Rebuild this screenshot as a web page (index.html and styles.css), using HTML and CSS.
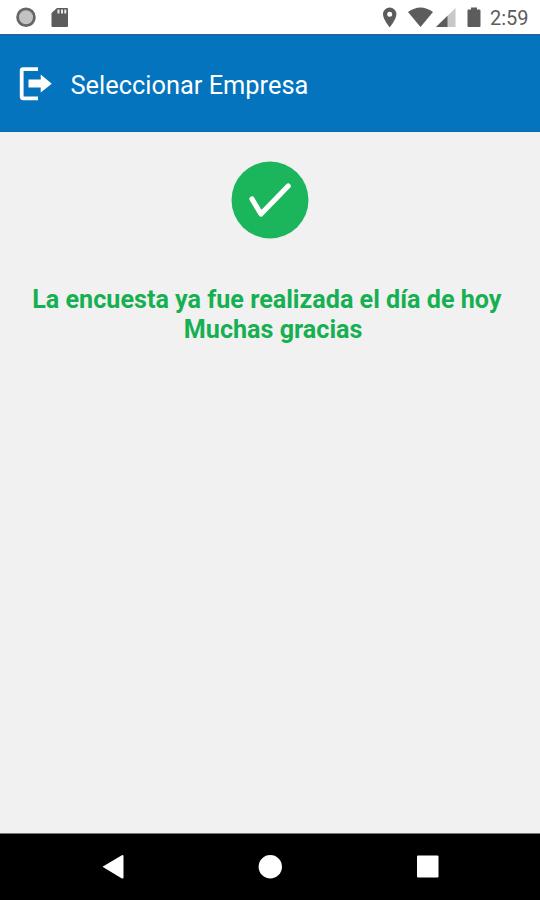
FILE: index.html
```html
<!DOCTYPE html>
<html lang="es">
<head>
<meta charset="utf-8">
<title>Seleccionar Empresa</title>
<link rel="stylesheet" href="styles.css">
</head>
<body>
<div class="screen">
  <div class="status">
    <svg class="status-left" width="72" height="34" viewBox="0 0 72 34">
      <circle cx="26" cy="17.2" r="8.400" fill="#c2c2c2" stroke="#666" stroke-width="2.800"/>
      <path d="M57 8h10q1 0 1 1v17q0 1-1 1H52.500q-1 0-1-1V13z" fill="#5c5c5c"/>
      <path d="M57.500 9.500h2v4h-2zM61 9.500h2v4h-2zM64.300 9.500h2v4h-2z" fill="#e8e8e8"/>
    </svg>
    <svg class="status-right" width="104" height="34" viewBox="380 0 104 34">
      <path fill-rule="evenodd" d="M389.700 7.500a6.700 6.700 0 0 0-6.700 6.700c0 5 6.700 13 6.700 13s6.700-8 6.700-13a6.700 6.700 0 0 0-6.700-6.700zm0 4.200a2.500 2.500 0 1 1 0 5 2.500 2.500 0 0 1 0-5z" fill="#5c5c5c"/>
      <path d="M408 12Q420.500 3 433 12L420.500 27z" fill="#5c5c5c"/>
      <path d="M455.500 8v19H436z" fill="#c8c8c8"/>
      <path d="M447.500 15.800V27H436z" fill="#5c5c5c"/>
      <path d="M471 7.500h6v2h2.500q1 0 1 1V26q0 1-1 1h-11q-1 0-1-1V10.500q0-1 1-1h2.500z" fill="#5c5c5c"/>
    </svg>
    <span class="clock">2:59</span>
  </div>
  <header class="bar">
    <svg class="exit" width="34" height="34" viewBox="19 67 34 34">
      <path d="M38 69.200H23.200Q21.700 69.200 21.700 70.700V96.800Q21.700 98.300 23.200 98.300H38" fill="none" stroke="#fff" stroke-width="3.800"/>
      <path d="M28.500 79.500H40.700V74.500L51.800 83.700L40.700 92.500V87.500H28.500z" fill="#fff"/>
    </svg>
    <h1 class="title">Seleccionar Empresa</h1>
  </header>
  <main class="content">
    <svg class="check" width="78" height="78" viewBox="0 0 78 78">
      <circle cx="39" cy="39" r="38.500" fill="#1bb55c"/>
      <path d="M21 38L30 53L57.200 25" fill="none" stroke="#fff" stroke-width="5.200" stroke-linecap="round" stroke-linejoin="round"/>
    </svg>
    <p class="message"><span class="line">La encuesta ya fue realizada el día de hoy </span><span class="line"> Muchas gracias</span></p>
  </main>
  <nav class="nav">
    <svg width="540" height="66" viewBox="0 834 540 66" fill="#fff">
      <path d="M102.500 866.700L121.500 855.400Q123.500 854.400 123.500 856.400V877.200Q123.500 879.200 121.500 878.200z"/>
      <circle cx="270.300" cy="866.700" r="11.700"/>
      <rect x="417" y="855.600" width="21.500" height="22" rx="1"/>
    </svg>
  </nav>
</div>
</body>
</html>
```

FILE: styles.css
```css
body {
  margin: 0;
  font-family: Roboto, "Liberation Sans", sans-serif;
}

svg {
  display: block;
}

.screen {
  display: flex;
  flex-direction: column;
  width: 540px;
  height: 900px;
  background: #f1f1f1;
  overflow: hidden;
}

.status {
  display: flex;
  align-items: center;
  height: 34px;
  background: #fff;
}

.status-right {
  margin-left: auto;
}

.clock {
  width: 56px;
  padding: 2px 0 0 6px;
  font-size: 20px;
  line-height: 34px;
  color: #5c5c5c;
  box-sizing: border-box;
}

.bar {
  display: flex;
  align-items: center;
  height: 98px;
  box-sizing: border-box;
  padding-left: 19px;
  background: #0374bd;
  border-top: 2px solid #1a68a8;
  border-bottom: 1px solid #1166a8;
}

.title {
  margin: 2px 0 0 17.500px;
  font-size: 25.400px;
  font-weight: 400;
  line-height: 32px;
  color: #fff;
  white-space: nowrap;
}

.content {
  display: flex;
  flex: 1;
  flex-direction: column;
  align-items: center;
  padding-top: 29px;
}

.message {
  margin: 46px 0 0;
  font-size: 25.150px;
  font-weight: 700;
  line-height: 29.500px;
  text-align: center;
  color: #16b052;
}

.line {
  display: block;
  white-space: pre;
}

.nav {
  height: 66px;
  background: #000;
  border-top: 1px solid #777;
}
```
